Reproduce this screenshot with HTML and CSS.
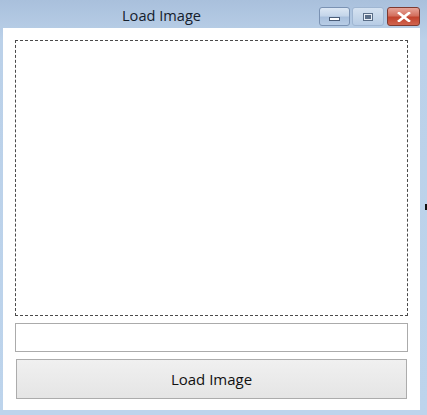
FILE: index.html
```html
<!DOCTYPE html>
<html>
<head>
<meta charset="utf-8">
<link rel="stylesheet" href="styles.css">
</head>
<body>
<div class="window">
  <div class="titlebar">
    <div class="title">Load Image</div>
    <div class="controls">
      <div class="cbtn min"><span class="min-glyph"></span></div>
      <div class="cbtn max"><span class="max-glyph"></span></div>
      <div class="cbtn close">
        <svg width="14" height="10" viewBox="0 0 14 10"><path d="M2 1 L12 9 M12 1 L2 9" stroke="#ffffff" stroke-width="2.6" stroke-linecap="square"/></svg>
      </div>
    </div>
  </div>
  <div class="client">
    <div class="picture"></div>
    <div class="textbox"></div>
    <div class="button">Load Image</div>
  </div>
  <span class="mark"></span>
</div>
</body>
</html>
```

FILE: styles.css
```css
html, body {
  margin: 0;
  padding: 0;
  width: 427px;
  height: 415px;
  overflow: hidden;
}
.window {
  position: relative;
  width: 427px;
  height: 415px;
  box-sizing: border-box;
  background: linear-gradient(to bottom, #a9c0dc 0px, #bbd1e9 40px, #bdd4ec 100%);
  padding: 0 7px 5px 3px;
  display: flex;
  flex-direction: column;
  font-family: "Open Sans", "Noto Sans", sans-serif;
}
.titlebar {
  height: 28px;
  position: relative;
  display: flex;
  align-items: flex-start;
}
.title {
  position: absolute;
  left: 119px;
  top: 5px;
  font-size: 14.6px;
  color: #15202c;
}
.controls {
  margin-left: auto;
  margin-top: 7px;
  display: flex;
  gap: 2px;
}
.cbtn {
  height: 19px;
  box-sizing: border-box;
  border-radius: 3px;
  display: flex;
  align-items: center;
  justify-content: center;
}
.min {
  width: 31px;
  border: 1px solid #7a92b3;
  background: linear-gradient(to bottom, #dce7f4 0%, #c5d6ea 45%, #a9c0dd 55%, #b8cde6 100%);
}
.max {
  width: 32px;
  border: 1px solid #9fb6d2;
  background: linear-gradient(to bottom, #d5e2f1 0%, #c6d7ea 50%, #b7cce5 100%);
}
.close {
  width: 33px;
  margin-left: 1px;
  border: 1px solid #7e3a30;
  background: linear-gradient(to bottom, #e7a498 0%, #d3705f 45%, #c2432e 55%, #d0644f 100%);
}
.min-glyph {
  width: 11px;
  height: 4px;
  box-sizing: border-box;
  border: 1px solid #4a5d78;
  background: #ffffff;
  margin-top: 5px;
}
.max-glyph {
  width: 10px;
  height: 8px;
  box-sizing: border-box;
  border: 1px solid #5a6e88;
  background: #e8eef6;
  box-shadow: inset 0 0 0 1px #e8eef6, inset 0 0 0 3px #5a6e88;
}
.client {
  flex: 1;
  background: #ffffff;
  padding: 12px 12px 11px 12px;
  display: flex;
  flex-direction: column;
  gap: 7px;
}
.picture {
  flex: 1;
  border: 1px dashed #4a4a4a;
}
.textbox {
  height: 29px;
  box-sizing: border-box;
  border: 1px solid #ababab;
  background: #ffffff;
}
.button {
  height: 40px;
  box-sizing: border-box;
  margin: 0 1px;
  border: 1px solid #acacac;
  background: linear-gradient(to bottom, #f0f0f0 0%, #e5e5e5 100%);
  display: flex;
  align-items: center;
  justify-content: center;
  font-size: 15px;
  color: #111111;
}
.mark {
  position: absolute;
  left: 425px;
  top: 204px;
  width: 2px;
  height: 6px;
  background: #111111;
}
```
